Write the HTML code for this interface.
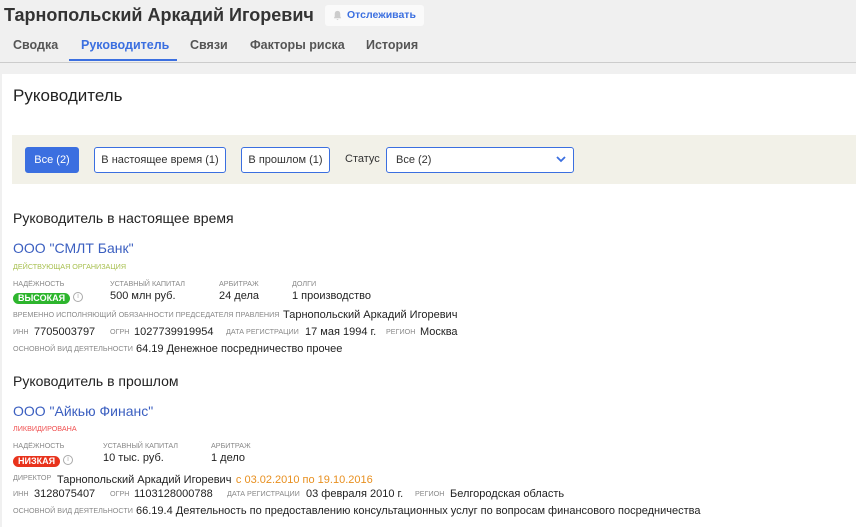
<!DOCTYPE html>
<html><head><meta charset="utf-8"><style>
*{margin:0;padding:0;box-sizing:border-box}
body{width:856px;height:527px;overflow:hidden;background:#f0f0f0;font-family:"Liberation Sans",sans-serif;color:#222;position:relative}
.a{position:absolute;white-space:nowrap}
.lb{font-size:7.2px;color:#888;text-transform:uppercase}
.v{font-size:11px;color:#222}
.tab{font-size:12.5px;font-weight:bold;color:#555;top:38px}
.btn{position:absolute;top:147px;height:26px;border:1px solid #3b6fe0;border-radius:3px;font-size:11px;line-height:24px;text-align:center;background:#fff;color:#333}
.badge{display:inline-block;border-radius:7px;color:#fff;font-size:9px;font-weight:bold;padding:0 5px;height:11px;line-height:11px}
.info{display:inline-block;width:10px;height:10px;border:1px solid #aaa;border-radius:50%;font-size:7px;color:#aaa;text-align:center;line-height:8px;vertical-align:middle;margin-left:3px}
</style></head><body>
<div class="a" style="left:4px;top:5px;font-size:18px;font-weight:bold;color:#333">Тарнопольский Аркадий Игоревич</div>
<div class="a" style="left:325px;top:5px;width:99px;height:21px;background:#fafafa;border-radius:3px;font-size:10.5px;font-weight:bold;color:#3b6fe0;line-height:21px;padding-left:22px">
<svg style="position:absolute;left:7px;top:5px" width="11" height="11" viewBox="0 0 12 12"><path d="M6 1C4 1 3 2.5 3 4.5V7L2 9h8L9 7V4.5C9 2.5 8 1 6 1zM5 10h2a1 1 0 0 1-2 0z" fill="#ccc"/></svg>Отслеживать</div>
<div class="a tab" style="left:13px">Сводка</div>
<div class="a tab" style="left:81px;color:#3b6fe0">Руководитель</div>
<div class="a" style="left:69px;top:59px;width:108px;height:2px;background:#3b6fe0"></div>
<div class="a tab" style="left:190px">Связи</div>
<div class="a tab" style="left:250px">Факторы риска</div>
<div class="a tab" style="left:366px">История</div>
<div class="a" style="left:0;top:62px;width:856px;height:1px;background:#ccc"></div>
<div class="a" style="left:2px;top:74px;width:854px;height:453px;background:#fff"></div>
<div class="a" style="left:13px;top:86px;font-size:17px;color:#222">Руководитель</div>
<div class="a" style="left:12px;top:135px;width:844px;height:49px;background:#f2f1e8"></div>
<div class="btn" style="left:25px;width:54px;background:#3b6fe0;color:#fff">Все (2)</div>
<div class="btn" style="left:94px;width:132px">В настоящее время (1)</div>
<div class="btn" style="left:241px;width:89px">В прошлом (1)</div>
<div class="a" style="left:345px;top:153px;font-size:11px;color:#333">Статус</div>
<div class="btn" style="left:386px;width:188px;text-align:left;padding-left:9px">Все (2)<svg style="position:absolute;right:7px;top:8px" width="10" height="7" viewBox="0 0 10 7"><path d="M1 1l4 4 4-4" stroke="#3b6fe0" stroke-width="1.8" fill="none"/></svg></div>

<div class="a" style="left:13px;top:210px;font-size:14px;color:#222">Руководитель в настоящее время</div>
<div class="a" style="left:13px;top:240px;font-size:14px;color:#3b5fc0">ООО "СМЛТ Банк"</div>
<div class="a lb" style="left:13px;top:262px;color:#a8c050">Действующая организация</div>
<div class="a lb" style="left:13px;top:279px">Надёжность</div>
<div class="a" style="left:13px;top:288px"><span class="badge" style="background:#2db52d">ВЫСОКАЯ</span><span class="info">i</span></div>
<div class="a lb" style="left:110px;top:279px">Уставный капитал</div>
<div class="a v" style="left:110px;top:290px">500 млн руб.</div>
<div class="a lb" style="left:219px;top:279px">Арбитраж</div>
<div class="a v" style="left:219px;top:290px">24 дела</div>
<div class="a lb" style="left:292px;top:279px">Долги</div>
<div class="a v" style="left:292px;top:290px">1 производство</div>
<div class="a lb" style="left:13px;top:310px">Временно исполняющий обязанности председателя правления</div>
<div class="a v" style="left:283px;top:309px">Тарнопольский Аркадий Игоревич</div>
<div class="a lb" style="left:13px;top:327px">ИНН</div><div class="a v" style="left:34px;top:326px">7705003797</div>
<div class="a lb" style="left:110px;top:327px">ОГРН</div><div class="a v" style="left:134px;top:326px">1027739919954</div>
<div class="a lb" style="left:226px;top:327px">Дата регистрации</div><div class="a v" style="left:305px;top:326px">17 мая 1994 г.</div>
<div class="a lb" style="left:386px;top:327px">Регион</div><div class="a v" style="left:420px;top:326px">Москва</div>
<div class="a lb" style="left:13px;top:344px">Основной вид деятельности</div>
<div class="a v" style="left:136px;top:343px">64.19 Денежное посредничество прочее</div>

<div class="a" style="left:13px;top:373px;font-size:14px;color:#222">Руководитель в прошлом</div>
<div class="a" style="left:13px;top:403px;font-size:14px;color:#3b5fc0">ООО "Айкью Финанс"</div>
<div class="a lb" style="left:13px;top:424px;color:#f05050">Ликвидирована</div>
<div class="a lb" style="left:13px;top:441px">Надёжность</div>
<div class="a" style="left:13px;top:451px"><span class="badge" style="background:#e8331c">НИЗКАЯ</span><span class="info">i</span></div>
<div class="a lb" style="left:103px;top:441px">Уставный капитал</div>
<div class="a v" style="left:103px;top:452px">10 тыс. руб.</div>
<div class="a lb" style="left:211px;top:441px">Арбитраж</div>
<div class="a v" style="left:211px;top:452px">1 дело</div>
<div class="a lb" style="left:13px;top:473px">Директор</div>
<div class="a" style="left:57px;top:470px"><span class="v">Тарнопольский Аркадий Игоревич</span> <span class="v" style="color:#e89020">с 03.02.2010 по 19.10.2016</span></div>
<div class="a lb" style="left:13px;top:489px">ИНН</div><div class="a v" style="left:34px;top:488px">3128075407</div>
<div class="a lb" style="left:110px;top:489px">ОГРН</div><div class="a v" style="left:134px;top:488px">1103128000788</div>
<div class="a lb" style="left:227px;top:489px">Дата регистрации</div><div class="a v" style="left:306px;top:488px">03 февраля 2010 г.</div>
<div class="a lb" style="left:415px;top:489px">Регион</div><div class="a v" style="left:450px;top:488px">Белгородская область</div>
<div class="a lb" style="left:13px;top:506px">Основной вид деятельности</div>
<div class="a v" style="left:136px;top:505px">66.19.4 Деятельность по предоставлению консультационных услуг по вопросам финансового посредничества</div>
</body></html>
